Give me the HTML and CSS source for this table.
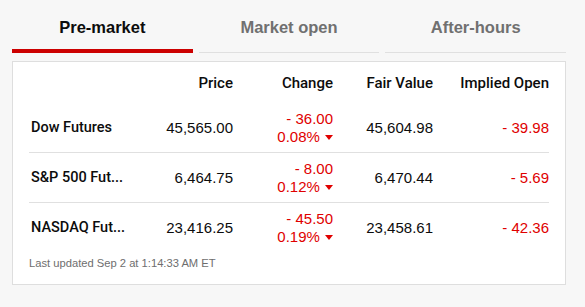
FILE: index.html
```html
<!DOCTYPE html>
<html>
<head>
<meta charset="utf-8">
<link rel="stylesheet" href="styles.css">
</head>
<body>
<div class="wrap">
  <div class="tabs">
    <div class="tab active">Pre-market</div>
    <div class="tab">Market open</div>
    <div class="tab">After-hours</div>
  </div>
  <div class="card">
    <div class="row head">
      <div class="name"></div>
      <div class="num">Price</div>
      <div class="num">Change</div>
      <div class="num">Fair Value</div>
      <div class="num">Implied Open</div>
    </div>
    <div class="row">
      <div class="name">Dow Futures</div>
      <div class="num">45,565.00</div>
      <div class="num chg"><span>- 36.00</span><span>0.08% <i class="down"></i></span></div>
      <div class="num">45,604.98</div>
      <div class="num red">- 39.98</div>
    </div>
    <div class="row">
      <div class="name">S&amp;P 500 Fut...</div>
      <div class="num">6,464.75</div>
      <div class="num chg"><span>- 8.00</span><span>0.12% <i class="down"></i></span></div>
      <div class="num">6,470.44</div>
      <div class="num red">- 5.69</div>
    </div>
    <div class="row last">
      <div class="name">NASDAQ Fut...</div>
      <div class="num">23,416.25</div>
      <div class="num chg"><span>- 45.50</span><span>0.19% <i class="down"></i></span></div>
      <div class="num">23,458.61</div>
      <div class="num red">- 42.36</div>
    </div>
    <div class="updated">Last updated Sep 2 at 1:14:33 AM ET</div>
  </div>
</div>
</body>
</html>
```
FILE: styles.css
```css
html, body {
  margin: 0;
  padding: 0;
  background: #f7f7f7;
  font-family: "Liberation Sans", Arial, sans-serif;
  color: #0c0c0c;
}
.wrap {
  width: 554px;
  padding: 0 0 0 12px;
}
.tabs {
  display: flex;
  gap: 6px;
  height: 53px;
}
.tab {
  flex: 1;
  box-sizing: border-box;
  border-bottom: 1px solid #e0e0e0;
  height: 53px;
  padding-top: 18px;
  text-align: center;
  font-size: 16.5px;
  font-weight: bold;
  color: #707070;
}
.tab.active {
  color: #0c0c0c;
  border-bottom: 4px solid #cc0000;
}
.card {
  margin-top: 8px;
  background: #fff;
  border: 1px solid #dedede;
  padding: 0 16px;
  height: 222px;
}
.row {
  display: grid;
  grid-template-columns: 104px 100px 100px 100px 116px;
  align-items: center;
  height: 49px;
  border-bottom: 1px solid #e0e0e0;
  font-size: 15px;
}
.row.head {
  height: 41px;
  border-bottom: none;
}
.row.head .num {
  font-family: Roboto, "Liberation Sans", sans-serif;
  font-weight: 500;
  font-size: 15px;
}
.row.last { border-bottom: none; }
.name {
  padding-left: 2px;
  font-family: Roboto, "Liberation Sans", sans-serif;
  font-weight: 500;
  font-size: 14.5px;
  white-space: nowrap;
}
.num {
  text-align: right;
}
.red { color: #e00000; }
.chg {
  color: #e00000;
  display: flex;
  flex-direction: column;
  align-items: flex-end;
  line-height: 18px;
  padding-top: 1px;
}
.down {
  display: inline-block;
  width: 0;
  height: 0;
  border-left: 4.5px solid transparent;
  border-right: 4.5px solid transparent;
  border-top: 5px solid #e00000;
  vertical-align: middle;
  margin-left: 1px;
  position: relative;
  top: -1px;
}
.updated {
  padding-top: 5px;
  font-size: 11.2px;
  color: #6e6e6e;
}
```
